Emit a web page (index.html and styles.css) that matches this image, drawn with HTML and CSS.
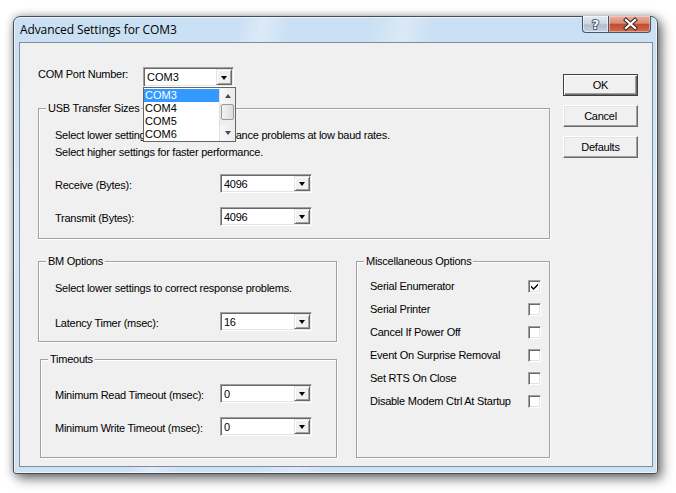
FILE: index.html
```html
<!DOCTYPE html>
<html>
<head>
<meta charset="utf-8">
<title>Advanced Settings for COM3</title>
<link rel="stylesheet" href="styles.css">
</head>
<body>
<div class="window">
  <div class="titlebar">
    <span class="title">Advanced Settings for COM3</span>
    <div class="caption-btns">
      <div class="cbtn help">
        <svg width="25" height="16" viewBox="0 0 25 16"><text x="12.5" y="12.5" text-anchor="middle" class="qmark">?</text></svg>
      </div>
      <div class="cbtn close">
        <svg width="43" height="16" viewBox="0 0 43 16">
          <path d="M17 4 L26 12 M26 4 L17 12" stroke="#3a2a28" stroke-width="4.2" stroke-linecap="square" fill="none"/>
          <path d="M17 4 L26 12 M26 4 L17 12" stroke="#ffffff" stroke-width="2.2" stroke-linecap="square" fill="none"/>
        </svg>
      </div>
    </div>
  </div>
  <div class="client">
    <div class="main">
      <div class="comrow">
        <span class="comlabel">COM Port Number:</span>
        <div class="combo com">
          <span class="val">COM3</span><span class="dd"><i class="tri"></i></span>
          <div class="droplist">
            <div class="items">
              <div class="item sel">COM3</div>
              <div class="item">COM4</div>
              <div class="item">COM5</div>
              <div class="item">COM6</div>
            </div>
            <div class="vscroll">
              <div class="sbtn"><i class="up"></i></div>
              <div class="thumb"></div>
              <div class="track"></div>
              <div class="sbtn"><i class="down"></i></div>
            </div>
          </div>
        </div>
      </div>

      <div class="group usb">
        <span class="legend">USB Transfer Sizes</span>
        <div class="line">Select lower settings to correct performance problems at low baud rates.</div>
        <div class="line">Select higher settings for faster performance.</div>
        <div class="field gap-top">
          <span class="flabel">Receive (Bytes):</span>
          <div class="combo"><span class="val">4096</span><span class="dd"><i class="tri"></i></span></div>
        </div>
        <div class="field gap-field">
          <span class="flabel">Transmit (Bytes):</span>
          <div class="combo"><span class="val">4096</span><span class="dd"><i class="tri"></i></span></div>
        </div>
      </div>

      <div class="lower">
        <div class="group bm">
          <span class="legend">BM Options</span>
          <div class="line">Select lower settings to correct response problems.</div>
          <div class="field gap-latency">
            <span class="flabel">Latency Timer (msec):</span>
            <div class="combo"><span class="val">16</span><span class="dd"><i class="tri"></i></span></div>
          </div>
        </div>

        <div class="group timeouts">
          <span class="legend">Timeouts</span>
          <div class="field">
            <span class="flabel">Minimum Read Timeout (msec):</span>
            <div class="combo"><span class="val">0</span><span class="dd"><i class="tri"></i></span></div>
          </div>
          <div class="field gap-field">
            <span class="flabel">Minimum Write Timeout (msec):</span>
            <div class="combo"><span class="val">0</span><span class="dd"><i class="tri"></i></span></div>
          </div>
        </div>

        <div class="group misc">
          <span class="legend">Miscellaneous Options</span>
          <div class="opt"><span class="olabel">Serial Enumerator</span><span class="check on"><svg width="9" height="9" viewBox="0 0 9 9"><path d="M1 3.5 L3.5 6 L8 1.5 L8 3.5 L3.5 8 L1 5.5 Z" fill="#000"/></svg></span></div>
          <div class="opt"><span class="olabel">Serial Printer</span><span class="check"></span></div>
          <div class="opt"><span class="olabel">Cancel If Power Off</span><span class="check"></span></div>
          <div class="opt"><span class="olabel">Event On Surprise Removal</span><span class="check"></span></div>
          <div class="opt"><span class="olabel">Set RTS On Close</span><span class="check"></span></div>
          <div class="opt"><span class="olabel">Disable Modem Ctrl At Startup</span><span class="check"></span></div>
        </div>
      </div>
    </div>

    <div class="buttons">
      <div class="btn default">OK</div>
      <div class="btn">Cancel</div>
      <div class="btn">Defaults</div>
    </div>
  </div>
</div>
</body>
</html>
```

FILE: styles.css
```css
* { box-sizing: border-box; }

html, body {
  margin: 0;
  padding: 0;
  background: #ffffff;
  width: 676px;
  height: 493px;
  overflow: hidden;
}

body {
  position: relative;
  font-family: "Liberation Sans", Arial, sans-serif;
  font-size: 11px;
  letter-spacing: -0.25px;
  color: #000;
}

/* window on the desktop */
.window {
  position: absolute;
  left: 13px;
  top: 16px;
  width: 645px;
  height: 458px;
  border: 1px solid #434e5a;
  border-radius: 7px 7px 3px 3px;
  background:
    linear-gradient(104deg,
      rgba(255,255,255,0) 0%,
      rgba(255,255,255,0) 30%,
      rgba(255,255,255,0.35) 33%,
      rgba(255,255,255,0) 37%,
      rgba(255,255,255,0) 47%,
      rgba(255,255,255,0.3) 52%,
      rgba(255,255,255,0) 56%,
      rgba(255,255,255,0) 100%),
    linear-gradient(to bottom, #c9dff3 0%, #d6e6f6 40%, #cfe1f3 100%);
  box-shadow:
    inset 0 0 0 1px rgba(255,255,255,0.6),
    4px 5px 12px rgba(0,0,0,0.5),
    0 0 8px rgba(0,0,0,0.3);
  display: flex;
  flex-direction: column;
}

.titlebar {
  position: relative;
  height: 25px;
  flex: none;
}

.title {
  display: block;
  padding-left: 6px;
  line-height: 25px;
  font-family: "Open Sans", "Noto Sans", sans-serif;
  font-size: 12px;
  color: #000;
  letter-spacing: -0.1px;
}

.caption-btns {
  position: absolute;
  top: -1px;
  right: 6px;
  display: flex;
  height: 17px;
}

.cbtn {
  height: 17px;
  border: 1px solid #4b5561;
  border-top: none;
}

.cbtn svg { display: block; }

.help {
  width: 26px;
  border-right: none;
  border-radius: 0 0 0 4px;
  background: linear-gradient(to bottom, #e4ecf4 0%, #c9d5e2 50%, #aebdcd 55%, #c5d2e0 100%);
  box-shadow: inset 0 0 0 1px rgba(255,255,255,0.5);
}

.qmark {
  font-family: "DejaVu Sans", sans-serif;
  font-size: 13px;
  font-weight: bold;
  fill: #f4f6f9;
  stroke: #3d4854;
  stroke-width: 1.6px;
  paint-order: stroke;
  letter-spacing: 0;
}

.close {
  width: 43px;
  border-radius: 0 0 4px 0;
  background: linear-gradient(to bottom, #e9b1a2 0%, #d98a75 45%, #c44a31 52%, #cf6b4f 100%);
  box-shadow: inset 0 0 0 1px rgba(255,230,220,0.45);
}

/* client area */
.client {
  margin-left: 5px;
  width: 634px;
  height: 425px;
  border: 1px solid #7d8d9d;
  background: #f0f0f0;
  display: flex;
  flex: none;
}

.main {
  margin-left: 18px;
  width: 512px;
  display: flex;
  flex-direction: column;
}

.comrow {
  margin-top: 24px;
  height: 19px;
  display: flex;
  align-items: flex-start;
}

.comlabel {
  width: 105px;
  line-height: 13px;
  padding-top: 1px;
}

/* combo boxes */
.combo {
  position: relative;
  width: 92px;
  height: 19px;
  background: #fff;
  border: 1px solid;
  border-color: #a0a0a0 #ffffff #ffffff #a0a0a0;
  box-shadow: inset 1px 1px 0 #696969, inset -1px -1px 0 #e3e3e3;
  display: flex;
  align-items: center;
  padding: 1px;
}

.combo.com {
  width: 91px;
  height: 20px;
}

.combo .val {
  flex: 1;
  padding-left: 2px;
  line-height: 13px;
  padding-top: 1px;
}

.combo.com .val {
  letter-spacing: 0;
}

.dd {
  width: 16px;
  align-self: stretch;
  background: #f0f0f0;
  border: 1px solid;
  border-color: #e3e3e3 #696969 #696969 #e3e3e3;
  box-shadow: inset 1px 1px 0 #ffffff, inset -1px -1px 0 #a0a0a0;
  display: flex;
  align-items: center;
  justify-content: center;
}

.tri {
  display: block;
  width: 0;
  height: 0;
  border-left: 3.5px solid transparent;
  border-right: 3.5px solid transparent;
  border-top: 4px solid #000;
  margin-top: 1px;
}

/* open drop-down list */
.droplist {
  position: absolute;
  left: -1px;
  top: 19px;
  width: 93px;
  height: 55px;
  background: #fff;
  border: 1px solid #646464;
  display: flex;
  z-index: 5;
}

.items {
  flex: 1;
  padding-top: 1px;
}

.item {
  height: 13px;
  line-height: 13px;
  padding-left: 1px;
  letter-spacing: 0;
}

.item.sel {
  background: #3399ff;
  color: #fff;
}

.vscroll {
  width: 16px;
  display: flex;
  flex-direction: column;
  background: #eaeaea;
  border-left: 1px solid #e0e0e0;
}

.sbtn {
  height: 16px;
  display: flex;
  align-items: center;
  justify-content: center;
  background: linear-gradient(to right, #f8f8f8, #ececec);
}

.up, .down {
  display: block;
  width: 0;
  height: 0;
  border-left: 3.5px solid transparent;
  border-right: 3.5px solid transparent;
}

.up { border-bottom: 4px solid #4a4a4a; }
.down { border-top: 4px solid #4a4a4a; }

.thumb {
  height: 16px;
  margin: 0 1px;
  border: 1px solid #9a9a9a;
  border-radius: 2px;
  background: linear-gradient(to right, #f2f2f2, #dcdcdc);
}

.track {
  flex: 1;
  background: #eeeeee;
}

/* group boxes */
.group {
  position: relative;
  border: 1px solid #a0a0a0;
  box-shadow: inset 1px 1px 0 #ffffff, 1px 1px 0 #ffffff;
}

.legend {
  position: absolute;
  top: -7px;
  left: 7px;
  padding: 0 2px;
  line-height: 13px;
  background: #f0f0f0;
  white-space: nowrap;
}

.usb {
  margin-top: 22px;
  height: 131px;
  padding: 18px 0 0 16px;
}

.line {
  line-height: 17px;
  white-space: nowrap;
}

.field {
  display: flex;
  align-items: center;
  height: 19px;
}

.flabel {
  width: 165px;
  line-height: 13px;
  padding-top: 3px;
}

.gap-top { margin-top: 13px; }
.gap-field { margin-top: 14px; }
.gap-latency { margin-top: 15px; }

.lower {
  margin-top: 22px;
  display: grid;
  grid-template-columns: 299px 194px;
  grid-template-rows: 81px 99px;
  column-gap: 19px;
  row-gap: 17px;
}

.bm {
  grid-column: 1;
  grid-row: 1;
  padding: 18px 0 0 16px;
}

.timeouts {
  grid-column: 1;
  grid-row: 2;
  margin-left: 2px;
  padding: 24px 0 0 14px;
}

.misc {
  grid-column: 2;
  grid-row: 1 / 3;
  padding: 13px 0 0 13px;
}

.opt {
  height: 23px;
  display: flex;
  align-items: center;
}

.olabel {
  width: 158px;
  line-height: 13px;
  white-space: nowrap;
}

.check {
  width: 13px;
  height: 13px;
  background: #fff;
  border: 1px solid;
  border-color: #a0a0a0 #ffffff #ffffff #a0a0a0;
  box-shadow: inset 1px 1px 0 #696969, inset -1px -1px 0 #e3e3e3;
  display: flex;
  align-items: center;
  justify-content: center;
}

.check svg { display: block; }

/* push buttons */
.buttons {
  margin-left: 13px;
  margin-top: 31px;
  display: flex;
  flex-direction: column;
  gap: 9px;
}

.btn {
  width: 75px;
  height: 22px;
  background: #f0f0f0;
  border: 1px solid;
  border-color: #ffffff #696969 #696969 #ffffff;
  box-shadow: inset -1px -1px 0 #a0a0a0, inset 1px 1px 0 #e3e3e3;
  display: flex;
  align-items: center;
  justify-content: center;
  line-height: 13px;
}

.btn.default {
  border: 1px solid #3f3f3f;
  box-shadow: inset 1px 1px 0 #ffffff, inset -1px -1px 0 #696969, inset -2px -2px 0 #a0a0a0;
}
```
